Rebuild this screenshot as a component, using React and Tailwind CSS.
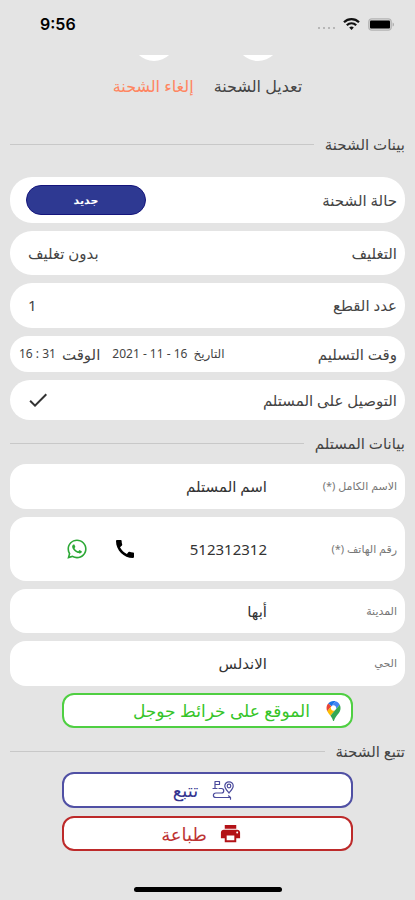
import { MdCall, MdPrint, MdCheck } from "react-icons/md";
import { FaWhatsapp } from "react-icons/fa";

function StatusBar() {
  return (
    <header dir="ltr" className="flex h-[55px] items-start justify-between pt-3 pr-5 pl-10">
      <time className="font-['Inter',sans-serif] text-base leading-6 font-semibold text-black">9:56</time>
      <div className="flex h-6 items-center gap-2">
        <div className="mt-2 flex gap-[3px]">
          <span className="size-[2px] rounded-full bg-[#a8a8a8]" />
          <span className="size-[2px] rounded-full bg-[#a8a8a8]" />
          <span className="size-[2px] rounded-full bg-[#a8a8a8]" />
          <span className="size-[2px] rounded-full bg-[#a8a8a8]" />
        </div>
        <svg viewBox="0 0 17 12" className="h-3 w-[17px]" fill="none" stroke="#111" strokeWidth="2.2">
          <path d="M1 4.3 A10.6 10.6 0 0 1 16 4.3" />
          <path d="M3.8 7.2 A6.6 6.6 0 0 1 13.2 7.2" />
          <path d="M8.5 12 L6.2 9.6 A3.3 3.3 0 0 1 10.8 9.6 Z" fill="#111" stroke="none" />
        </svg>
        <svg viewBox="0 0 27 13" className="h-[13px] w-[27px]">
          <rect x="0.75" y="0.75" width="22.5" height="11.5" rx="3.2" fill="#d2d2d2" stroke="#b4b4b4" strokeWidth="1.2" />
          <rect x="2" y="2.5" width="20" height="8" rx="1" fill="#000" />
          <path d="M24.6 4.4 C26.4 5 26.4 8 24.6 8.6 Z" fill="#a8a8a8" />
        </svg>
      </div>
    </header>
  );
}

function SectionTitle({ children }) {
  return (
    <div className="flex h-6 items-center gap-[11px]">
      <h2 className="text-[15px] leading-6 text-[#444]">{children}</h2>
      <span className="h-px flex-1 bg-[#c8c8c8]" />
    </div>
  );
}

function InfoRow({ label, height, padding, children }) {
  return (
    <div className={`flex items-center justify-between rounded-[22px] bg-white pr-2 ${padding} ${height}`}>
      <dt>{label}</dt>
      <dd>{children}</dd>
    </div>
  );
}

function Field({ id, label, value, height, children }) {
  return (
    <div className={`flex items-center rounded-2xl bg-white pr-2 ${height}`}>
      <label htmlFor={id} className="w-[130px] shrink-0 text-[11px] text-[#777]">
        {label}
      </label>
      <input id={id} type="text" defaultValue={value} className="w-[100px] min-w-0 bg-transparent text-right text-[15px] text-[#333] outline-none" />
      {children}
    </div>
  );
}

function MapPin() {
  return (
    <svg viewBox="0 0 92 132" className="h-5 w-[15px]">
      <path fill="#1a73e8" d="M60.2 2.2C55.8.8 51 0 46.1 0 32 0 19.3 6.4 10.8 16.5l21.8 18.3L60.2 2.2z" />
      <path fill="#ea4335" d="M10.8 16.5C4.1 24.5 0 34.9 0 46.1c0 8.7 1.7 15.7 4.6 22l28-33.3-21.8-18.3z" />
      <path fill="#4285f4" d="M46.2 28.5c9.8 0 17.7 7.9 17.7 17.7 0 4.3-1.6 8.3-4.2 11.4 0 0 13.9-16.6 27.5-32.7-5.6-10.8-15.3-19-27-22.7L32.6 34.8c3.3-3.8 8.1-6.3 13.6-6.3" />
      <path fill="#fbbc04" d="M46.2 63.8c-9.8 0-17.7-7.9-17.7-17.7 0-4.3 1.5-8.3 4.1-11.3l-28 33.3c4.8 10.6 12.8 19.2 21 29.9l34.1-40.5c-3.3 3.9-8.1 6.3-13.5 6.3" />
      <path fill="#34a853" d="M59.1 109.2c15.4-24.1 33.3-35 33.3-63 0-7.7-1.9-14.9-5.2-21.3L25.6 98c2.6 3.4 5.3 7.3 7.9 11.3 9.4 14.5 6.8 23.1 12.8 23.1s3.4-8.7 12.8-23.2" />
    </svg>
  );
}

function RouteIcon() {
  return (
    <svg viewBox="0 0 22 20" className="h-5 w-[22px]" fill="none" stroke="#4a4a9c" strokeWidth="1.2" strokeLinecap="round" strokeLinejoin="round">
      <path d="M3 8.5 V1.5 H7.5 V4.5 H3" />
      <path d="M1 8.5 H5 M7 8.5 H9.5 C12.5 8.5 12.5 13 9.5 13 H4 C0.5 13 0.5 17.5 4 17.5 H18" />
      <path d="M17 13 C14.5 10 12.8 8.3 12.8 6 A4.2 4.2 0 0 1 21.2 6 C21.2 8.3 19.5 10 17 13 Z" />
      <circle cx="17" cy="6" r="1.8" />
      <path d="M16.5 15.8 L18.5 17.5 L18.5 19.2" />
    </svg>
  );
}

export default function App() {
  return (
    <div dir="rtl" className="min-h-screen bg-[#e4e4e4] font-['Noto_Sans','DejaVu_Sans',sans-serif] text-[15px] text-[#444]">
      <StatusBar />
      <main className="px-[10px]">
        <div className="flex h-[6px] items-end justify-center gap-[60px] overflow-hidden pr-1">
          <span className="size-11 shrink-0 rounded-full bg-white" />
          <span className="size-11 shrink-0 rounded-full bg-white" />
        </div>
        <div className="mt-[13px] flex justify-center gap-5 text-base leading-6">
          <button type="button">تعديل الشحنة</button>
          <button type="button" className="text-[#ff8560]">إلغاء الشحنة</button>
        </div>

        <section className="mt-[34px]">
          <SectionTitle>بينات الشحنة</SectionTitle>
          <dl className="mt-[21px] flex flex-col gap-2">
            <InfoRow label="حالة الشحنة" height="h-[46px]" padding="pl-4">
              <button type="button" className="block h-[30px] w-[120px] rounded-full border border-[#15157c] bg-[#2e3992] text-[11px] font-bold text-white">
                جديد
              </button>
            </InfoRow>
            <InfoRow label="التغليف" height="h-11" padding="pl-[18px]">بدون تغليف</InfoRow>
            <InfoRow label="عدد القطع" height="h-[45px]" padding="pl-[18px]">1</InfoRow>
            <InfoRow label="وقت التسليم" height="h-9" padding="pl-[9px]">
              <span className="flex items-center text-xs">
                <span>التاريخ</span>
                <bdi dir="ltr" className="mr-1.5">2021 - 11 - 16</bdi>
                <span className="mr-3 text-[15px]">الوقت</span>
                <bdi dir="ltr" className="mr-1.5">16 : 31</bdi>
              </span>
            </InfoRow>
            <InfoRow label="التوصيل على المستلم" height="h-10" padding="pl-4">
              <MdCheck className="size-6 text-[#333]" />
            </InfoRow>
          </dl>
        </section>

        <section className="mt-[11px]">
          <SectionTitle>بيانات المستلم</SectionTitle>
          <form className="mt-[9px] flex flex-col gap-2">
            <Field id="name" label="الاسم الكامل (*)" value="اسم المستلم" height="h-[45px]" />
            <Field id="phone" label="رقم الهاتف (*)" value="512312312" height="h-16">
              <a href="tel:512312312" aria-label="اتصال" className="mr-[30px]">
                <MdCall className="size-6 text-black" />
              </a>
              <a href="#whatsapp" aria-label="واتساب" className="mr-[25px]">
                <FaWhatsapp className="size-[22px] text-[#2ca836]" />
              </a>
            </Field>
            <Field id="city" label="المدينة" value="أبها" height="h-11" />
            <Field id="district" label="الحي" value="الاندلس" height="h-[45px]" />
          </form>
          <button type="button" className="mx-[52px] mt-[7px] flex h-[35px] w-[calc(100%-104px)] items-center gap-4 rounded-xl border-2 border-[#4fcf42] bg-white pr-[10px] text-[17px] leading-6 text-[#35c428]">
            <MapPin />
            الموقع على خرائط جوجل
          </button>
        </section>

        <section className="mt-[11px]">
          <SectionTitle>تتبع الشحنة</SectionTitle>
          <div className="mx-[52px] mt-[9px] flex flex-col gap-2">
            <button type="button" className="flex h-9 items-center justify-center gap-[14px] rounded-xl border-2 border-[#5050a4] bg-white pr-2 text-lg leading-6 text-[#34348f]">
              <RouteIcon />
              تتبع
            </button>
            <button type="button" className="flex h-[35px] items-center justify-center gap-3 rounded-xl border-2 border-[#bd2a2a] bg-white pr-3 text-lg leading-6 text-[#bd3434]">
              <MdPrint className="size-[23px] text-[#b31217]" />
              طباعة
            </button>
          </div>
        </section>
      </main>
      <footer className="flex justify-center pt-9 pb-2">
        <span className="h-[5px] w-[148px] rounded-full bg-black" />
      </footer>
    </div>
  );
}
